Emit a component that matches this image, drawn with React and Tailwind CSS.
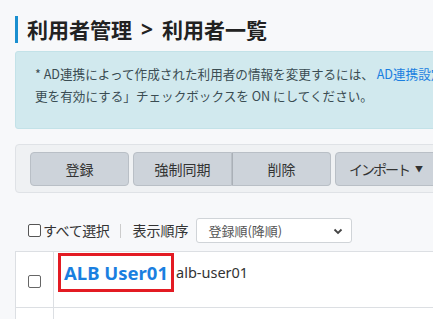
import React from "react";

const jp = { fontFamily: '"Noto Sans CJK JP", "Noto Sans", sans-serif' };
const latin = { fontFamily: '"Noto Sans", "Noto Sans CJK JP", sans-serif' };

function Btn({ children, className = "" }) {
  return (
    <button className={`h-[34px] w-[99px] bg-[#cdd3da] border border-[#b9bfc6] text-[14px] text-[#333] flex items-center justify-center ${className}`}>
      {children}
    </button>
  );
}

export default function App() {
  return (
    <div className="w-[433px] h-[319px] overflow-hidden bg-[#f7f8fa]" style={jp}>
      <div className="w-[800px] pl-[15px] pt-[16px]">
        <h1 className="flex items-center h-[27px]">
          <span className="w-[3px] h-[27px] bg-[#1a8fd0]" />
          <span className="ml-[9px] text-[21px] font-bold text-[#222] leading-none flex items-center">
            利用者管理<span className="mx-[9px]" style={latin}>&gt;</span>利用者一覧
          </span>
        </h1>

        <div className="mt-[8px] h-[78px] bg-[#d1e9ee] border border-[#c3e2e8] rounded-[3px] pl-[19px] pt-[11px] text-[12.6px] leading-[22px] text-[#3a4c52]">
          <p>* AD連携によって作成された利用者の情報を変更するには、 <span className="text-[#1a7fe0]">AD連携設定</span>の「利用者情報の変</p>
          <p>更を有効にする」チェックボックスを ON にしてください。</p>
        </div>

        <div className="mt-[15px] h-[49px] bg-[#eff1f3] border border-[#dfe2e6] rounded-[4px] pl-[14px] pt-[7px] flex gap-[4px]">
          <Btn className="rounded-[4px]">登録</Btn>
          <div className="flex">
            <Btn className="rounded-l-[4px]">強制同期</Btn>
            <Btn className="rounded-r-[4px] border-l-[#aab0b7]">削除</Btn>
          </div>
          <button className="h-[34px] w-[130px] bg-[#cdd3da] border border-[#b9bfc6] rounded-[4px] text-[14px] text-[#333] flex items-center pl-[13px]">
            <span className="tracking-[-2px]">インポート</span>
            <span className="ml-[6px] text-[8px]">▼</span>
          </button>
        </div>

        <div className="mt-[25px] flex items-center h-[25px] text-[14px] text-[#333]">
          <label className="flex items-center ml-[13px]">
            <span className="w-[13px] h-[13px] border border-[#555] rounded-[2px] bg-white" />
            <span className="ml-[2px] tracking-[-0.4px]">すべて選択</span>
          </label>
          <span className="mx-[11px] w-px h-[14px] bg-[#ccc]" />
          <span>表示順序</span>
          <div className="ml-[8px] w-[156px] h-[25px] bg-white border border-[#d0d4d8] rounded-[3px] flex items-center justify-between pl-[11px] pr-[8px] text-[13px] text-[#555]">
            <span>登録順(降順)</span>
            <svg width="10" height="10" viewBox="0 0 10 10"><path d="M1.5 3.5 L5 7 L8.5 3.5" fill="none" stroke="#444" strokeWidth="1.8" /></svg>
          </div>
        </div>

        <div className="mt-[8px] bg-white border border-[#dcdfe3] h-[80px]">
          <div className="flex h-[56px] border-b border-[#dcdfe3]">
            <div className="w-[38px] border-r border-[#dcdfe3] flex items-center justify-center">
              <span className="w-[13px] h-[13px] border border-[#666] rounded-[2px] mt-[4px]" />
            </div>
            <div className="flex items-start pt-[1px] pl-[4px]">
              <div className="border-[3px] border-[#e31b23] px-[3px] h-[39px] flex items-center">
                <span className="text-[18.5px] font-bold text-[#1a7fe0]" style={latin}>ALB User01</span>
              </div>
              <span className="ml-[2px] mt-[9px] text-[14.5px] text-[#333]" style={latin}>alb-user01</span>
            </div>
          </div>
          <div className="flex h-full">
            <div className="w-[38px] border-r border-[#dcdfe3]" />
          </div>
        </div>
      </div>
    </div>
  );
}
